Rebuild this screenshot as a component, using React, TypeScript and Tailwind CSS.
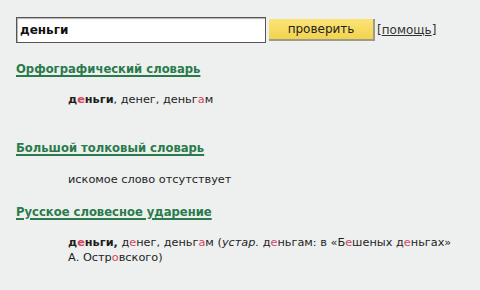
import React from "react";

const Accent = ({ children }: { children: React.ReactNode }) => (
  <span className="text-[#d6455f]">{children}</span>
);

const Heading = ({ children }: { children: React.ReactNode }) => (
  <a href="#" className="font-bold text-[11.6px] text-[#2a7a4c] underline underline-offset-2 decoration-[1.5px]">
    {children}
  </a>
);

export default function App() {
  return (
    <div className="w-[480px] h-[290px] bg-[#edf0ee] text-[#1e1e1e] overflow-hidden pt-[17px] pl-[16px] font-['DejaVu_Sans',sans-serif]">
      <div className="flex items-center h-[26px]">
        <div className="w-[250px] h-[26px] bg-white border border-[#555] shadow-[inset_1px_1px_1px_rgba(0,0,0,0.3)] flex items-center pl-[3px] text-[12px] font-bold text-[#111]">
          деньги
        </div>
        <button className="ml-[3px] w-[106px] h-[22px] bg-gradient-to-b from-[#fbe375] to-[#f3d34d] border-r-2 border-b-2 border-[#9b9b8a] text-[12px] text-[#222] flex items-center justify-center">
          проверить
        </button>
        <span className="ml-[2px] text-[12px] text-[#333]">
          [<a href="#" className="underline">помощь</a>]
        </span>
      </div>

      <div className="mt-[17px] leading-[16px]">
        <Heading>Орфографический словарь</Heading>
      </div>
      <div className="mt-[15px] pl-[52px] text-[11.3px] leading-[16px]">
        <b>д<Accent>е</Accent>ньги</b>, денег, деньг<Accent>а</Accent>м
      </div>

      <div className="mt-[31px] leading-[16px]">
        <Heading>Большой толковый словарь</Heading>
      </div>
      <div className="mt-[16px] pl-[52px] text-[11.3px] leading-[16px]">искомое слово отсутствует</div>

      <div className="mt-[15px] leading-[16px]">
        <Heading>Русское словесное ударение</Heading>
      </div>
      <div className="mt-[15px] pl-[52px] text-[11.3px] leading-[15px]">
        <b>д<Accent>е</Accent>ньги,</b> д<Accent>е</Accent>нег, деньг<Accent>а</Accent>м (<i>устар.</i> д<Accent>е</Accent>ньгам: в «Б<Accent>е</Accent>шеных д<Accent>е</Accent>ньгах»
        <br />
        А. Остр<Accent>о</Accent>вского)
      </div>
    </div>
  );
}
